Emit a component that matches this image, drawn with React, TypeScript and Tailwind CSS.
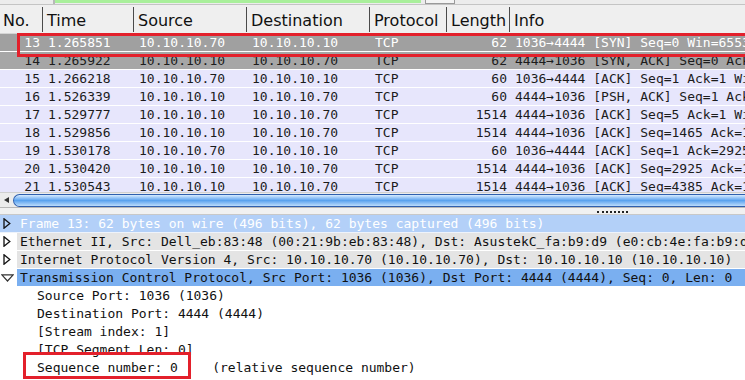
import React from 'react';

const MONO = { fontFamily: '"DejaVu Sans Mono", "Liberation Mono", monospace' };

type Packet = {
  no: number;
  time: string;
  src: string;
  dst: string;
  len: number;
  info: string;
};

const PACKETS: Packet[] = [
  { no: 13, time: '1.265851', src: '10.10.10.70', dst: '10.10.10.10', len: 62, info: '1036→4444 [SYN] Seq=0 Win=65535 Len=0 MSS=1460' },
  { no: 14, time: '1.265922', src: '10.10.10.10', dst: '10.10.10.70', len: 62, info: '4444→1036 [SYN, ACK] Seq=0 Ack=1 Win=29200 Len=0' },
  { no: 15, time: '1.266218', src: '10.10.10.70', dst: '10.10.10.10', len: 60, info: '1036→4444 [ACK] Seq=1 Ack=1 Win=65535 Len=0' },
  { no: 16, time: '1.526339', src: '10.10.10.10', dst: '10.10.10.70', len: 60, info: '4444→1036 [PSH, ACK] Seq=1 Ack=1 Win=29200 Len=4' },
  { no: 17, time: '1.529777', src: '10.10.10.10', dst: '10.10.10.70', len: 1514, info: '4444→1036 [ACK] Seq=5 Ack=1 Win=29200 Len=1460' },
  { no: 18, time: '1.529856', src: '10.10.10.10', dst: '10.10.10.70', len: 1514, info: '4444→1036 [ACK] Seq=1465 Ack=1 Win=29200 Len=1460' },
  { no: 19, time: '1.530178', src: '10.10.10.70', dst: '10.10.10.10', len: 60, info: '1036→4444 [ACK] Seq=1 Ack=2925 Win=65535 Len=0' },
  { no: 20, time: '1.530420', src: '10.10.10.10', dst: '10.10.10.70', len: 1514, info: '4444→1036 [ACK] Seq=2925 Ack=1 Win=29200 Len=1460' },
  { no: 21, time: '1.530543', src: '10.10.10.10', dst: '10.10.10.70', len: 1514, info: '4444→1036 [ACK] Seq=4385 Ack=1 Win=29200 Len=1460' },
];

function HeaderCell({ label, w, last }: { label: string; w: string; last?: boolean }) {
  return (
    <div className={`${w} h-full flex items-center pt-[3px] pl-[4px] relative shrink-0`}>
      {label}
      {!last && <div className="absolute right-0 top-[2px] bottom-[1px] w-px bg-[#4a4a4a]" />}
    </div>
  );
}

// the arrow glyph gets a full mono cell so the rest of the info lines up
function Info({ text }: { text: string }) {
  const [a, b] = text.split('→');
  return (
    <>
      {a}
      <span className="inline-block w-[7.83px] text-center">→</span>
      {b}
    </>
  );
}

function PacketRow({ p }: { p: Packet }) {
  const selected = p.no === 13;
  const grey = p.no === 14;
  const bg = selected ? 'bg-[#a0a0a0] text-white' : grey ? 'bg-[#a6a6a6] text-[#1c1c1c]' : 'bg-[#e7e6fc] text-[#1c1c1c]';
  return (
    <div className={`h-[18px] flex items-center whitespace-nowrap overflow-hidden border-b border-white ${bg}`}>
      <div className="w-[43px] shrink-0 text-right pr-[3px]">{p.no}</div>
      <div className="w-[91px] shrink-0 pl-[5px]">{p.time}</div>
      <div className="w-[113px] shrink-0 pl-[5px]">{p.src}</div>
      <div className="w-[123px] shrink-0 pl-[5px]">{p.dst}</div>
      <div className="w-[77px] shrink-0 pl-[5px]">TCP</div>
      <div className="w-[63px] shrink-0 text-right pr-[3px]">{p.len}</div>
      <div className="pl-[5px] shrink-0">
        <Info text={p.info} />
      </div>
    </div>
  );
}

function Closed({ color = '#111' }: { color?: string }) {
  return (
    <svg width="8" height="11" viewBox="0 0 8 11" className="shrink-0">
      <path d="M1 0.8 L6.8 5.5 L1 10.2 Z" fill="none" stroke={color} strokeWidth="1.3" strokeLinejoin="miter" />
    </svg>
  );
}

function Open() {
  return (
    <svg width="13" height="8" viewBox="0 0 13 8" className="shrink-0">
      <path d="M0.8 0.8 L12.2 0.8 L6.5 7 Z" fill="none" stroke="#333" strokeWidth="1.2" />
    </svg>
  );
}

function TreeRow({ text, bg, open }: { text: string; bg: string; open?: boolean }) {
  return (
    <div className="h-[18px] flex items-stretch text-[#111] border-b border-white overflow-hidden">
      <div className={`w-[17px] shrink-0 flex items-center bg-white ${open ? 'pl-[1px]' : 'pl-[3px]'}`}>
        {open ? <Open /> : <Closed />}
      </div>
      <div className={`flex-1 ${bg} pl-[3px] whitespace-nowrap`}>{text}</div>
    </div>
  );
}

export default function App() {
  return (
    <div className="w-[745px] h-[380px] overflow-hidden bg-white relative text-[13px] leading-[18px]" style={MONO}>
      {/* top toolbar remnant */}
      <div className="h-[5px] bg-[#ececec] border-b border-[#c4c4c4] flex items-start">
        <div className="w-[55px] h-[4px] border-r-2 border-[#b8b8b8]" />
        <div className="w-[366px] h-[3px] bg-[#a9ef9b]" />
        <div className="w-[4px]" />
        <div className="w-[30px] h-[4px] border border-t-0 border-[#9a9a9a] bg-[#f4f4f4]" />
      </div>

      {/* column header */}
      <div
        className="h-[29px] flex items-stretch bg-[#efefef] border-b border-[#d4d4d4] text-[16px] text-[#111]"
        style={{ fontFamily: '"DejaVu Sans", "Liberation Sans", sans-serif' }}
      >
        <div className="w-[43px] h-full flex items-center pt-[3px] pl-[3px] relative shrink-0">
          No.
          <div className="absolute right-0 top-[2px] bottom-[1px] w-px bg-[#4a4a4a]" />
        </div>
        <HeaderCell label="Time" w="w-[91px]" />
        <HeaderCell label="Source" w="w-[113px]" />
        <HeaderCell label="Destination" w="w-[123px]" />
        <HeaderCell label="Protocol" w="w-[77px]" />
        <HeaderCell label="Length" w="w-[63px]" />
        <HeaderCell label="Info" w="flex-1" last />
      </div>

      {/* packet list */}
      <div className="h-[158px] overflow-hidden">
        {PACKETS.map((p) => (
          <PacketRow key={p.no} p={p} />
        ))}
      </div>

      {/* horizontal scrollbar */}
      <div className="h-[16px] bg-[#ececec] border-t border-[#d0d0d0] border-b border-b-[#b8b8b8] flex items-center">
        <div className="w-[13px] flex justify-center">
          <svg width="5" height="6" viewBox="0 0 5 6">
            <path d="M0 3 L5 0 L5 6 Z" fill="#333" />
          </svg>
        </div>
        <div className="flex-1 h-[13px] rounded-l-full border border-r-0 border-[#2f5fae] bg-gradient-to-b from-[#d6ebff] via-[#5aa2ee] to-[#bcdcfb]" />
      </div>

      {/* splitter */}
      <div className="h-[7px] bg-[#f1f1f1] border-b border-[#c8c8c8] flex items-center justify-start">
        <div className="ml-[597px] w-[31px] h-[2px] mt-[1px] border-t-2 border-dotted border-[#222]" />
      </div>

      {/* details tree */}
      <div className="whitespace-nowrap">
        <div className="h-[18px] flex items-center bg-[#b3d0f8] text-white border-b border-[#eef3fb] overflow-hidden">
          <div className="w-[20px] shrink-0 pl-[3px] flex items-center"><Closed /></div>
          <span>Frame 13: 62 bytes on wire (496 bits), 62 bytes captured (496 bits)</span>
        </div>
        <TreeRow bg="bg-[#e4e4e4]" text="Ethernet II, Src: Dell_eb:83:48 (00:21:9b:eb:83:48), Dst: AsustekC_fa:b9:d9 (e0:cb:4e:fa:b9:d9)" />
        <TreeRow bg="bg-[#e4e4e4]" text="Internet Protocol Version 4, Src: 10.10.10.70 (10.10.10.70), Dst: 10.10.10.10 (10.10.10.10)" />
        <TreeRow bg="bg-[#7aaff0]" open text="Transmission Control Protocol, Src Port: 1036 (1036), Dst Port: 4444 (4444), Seq: 0, Len: 0" />
        {['Source Port: 1036 (1036)', 'Destination Port: 4444 (4444)', '[Stream index: 1]', '[TCP Segment Len: 0]'].map((t) => (
          <div key={t} className="h-[18px] pl-[37px] text-[#111]">
            {t}
          </div>
        ))}
        <div className="h-[18px] pl-[37px] text-[#111] whitespace-pre">
          Sequence number: 0    <span className="ml-[3px]">(relative sequence number)</span>
        </div>
      </div>

      {/* annotation boxes */}
      <div className="absolute left-[17px] top-[33px] w-[740px] h-[24px] border-[3px] border-[#e3202b]" />
      <div className="absolute left-[23px] top-[352px] w-[168px] h-[27px] border-[3px] border-[#e3202b]" />
    </div>
  );
}
